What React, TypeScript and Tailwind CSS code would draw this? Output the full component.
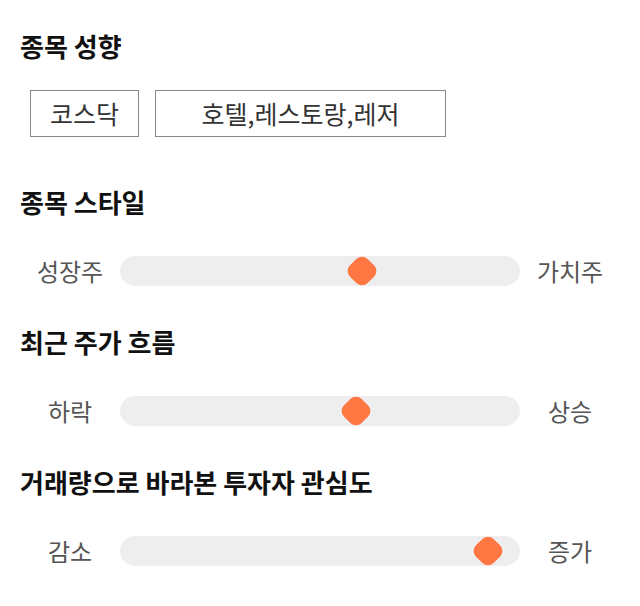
import React from "react";

const font = { fontFamily: '"Noto Sans CJK KR", "Noto Sans", sans-serif' };

function Slider({ left, right, value }: { left: string; right: string; value: number }) {
  return (
    <div className="flex items-center h-[30px]">
      <div className="w-[100px] text-center text-[24px] text-[#555]">{left}</div>
      <div className="relative flex-1 h-[30px] rounded-full bg-[#eeeeee]">
        <div
          className="absolute top-1/2 w-[25px] h-[25px] -translate-x-1/2 -translate-y-1/2 rotate-45 rounded-[8px] bg-[#ff7743]"
          style={{ left: `${value}%` }}
        />
      </div>
      <div className="w-[100px] text-center text-[24px] text-[#555]">{right}</div>
    </div>
  );
}

export default function App() {
  return (
    <div style={font} className="w-[640px] h-[606px] bg-white px-5 pt-[30px]">
      <h2 className="text-[26px] leading-[32px] font-bold text-[#111]">종목 성향</h2>
      <div className="flex gap-4 mt-[28px] ml-[10px]">
        <div className="w-[109px] h-[47px] border border-[#888] flex items-center justify-center text-[25px] text-[#333]">
          코스닥
        </div>
        <div className="w-[291px] h-[47px] border border-[#888] flex items-center justify-center text-[25px] text-[#333]">
          호텔,레스토랑,레저
        </div>
      </div>

      <h2 className="mt-[49px] text-[26px] leading-[32px] font-bold text-[#111]">종목 스타일</h2>
      <div className="mt-[38px]">
        <Slider left="성장주" right="가치주" value={60.5} />
      </div>

      <h2 className="mt-[40px] text-[26px] leading-[32px] font-bold text-[#111]">최근 주가 흐름</h2>
      <div className="mt-[38px]">
        <Slider left="하락" right="상승" value={59} />
      </div>

      <h2 className="mt-[40px] text-[26px] leading-[32px] font-bold text-[#111]">거래량으로 바라본 투자자 관심도</h2>
      <div className="mt-[38px]">
        <Slider left="감소" right="증가" value={92} />
      </div>
    </div>
  );
}
